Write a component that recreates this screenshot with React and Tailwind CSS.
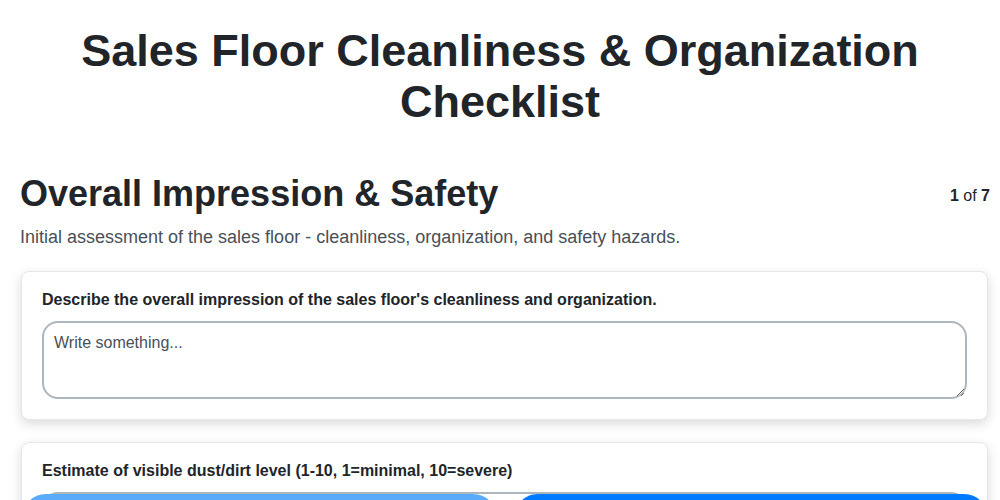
import React from "react";

export default function App() {
  return (
    <div className="min-h-[900px] bg-white text-[#212529]" style={{ fontFamily: '"Liberation Sans", Arial, sans-serif' }}>
      <h1 className="px-[70px] pt-[25px] text-center text-[45px] font-bold leading-[51px]">
        Sales Floor Cleanliness &amp; Organization Checklist
      </h1>
      <div className="pl-5 pr-[10px] pb-32">
        <div className="mt-[45px] flex items-start justify-between">
          <h2 className="text-[36px] font-bold leading-[44px]">Overall Impression &amp; Safety</h2>
          <div className="pt-[12px] text-[16px] leading-[24px]">
            <span className="font-bold">1</span> of <span className="font-bold">7</span>
          </div>
        </div>
        <p className="mt-[8px] text-[18px] leading-[26px] text-[#495057]">
          Initial assessment of the sales floor - cleanliness, organization, and safety hazards.
        </p>

        <div className="mt-[21px] ml-[1px] mr-[2px] rounded-[8px] border border-[#e5e7eb] bg-white px-[20px] pt-[18px] pb-[20px] shadow-[0_4px_12px_rgba(0,0,0,0.15)]">
          <label className="block text-[16px] font-bold leading-[20px]">
            Describe the overall impression of the sales floor's cleanliness and organization.
          </label>
          <textarea
            placeholder="Write something..."
            className="mt-[11px] block h-[78px] w-full resize-y rounded-[16px] border-2 border-[#adb5bd] px-[10px] py-[8px] text-[16px] text-[#495057] placeholder:text-[#495057] outline-none"
            style={{ fontFamily: '"Liberation Sans", Arial, sans-serif' }}
          />
        </div>

        <div className="mt-[22px] ml-[1px] mr-[2px] rounded-[8px] border border-[#e5e7eb] bg-white px-[20px] pt-[18px] pb-[20px] shadow-[0_4px_12px_rgba(0,0,0,0.15)]">
          <label className="block text-[16px] font-bold leading-[20px]">
            Estimate of visible dust/dirt level (1-10, 1=minimal, 10=severe)
          </label>
          <input
            type="number"
            className="mt-[11px] block h-[40px] w-full rounded-[16px] border-2 border-[#adb5bd] px-[10px] text-[16px]"
          />
        </div>
      </div>

      <div className="fixed left-[22px] right-[12px] top-[494px] flex gap-[17px]">
        <button className="h-[48px] flex-1 rounded-full bg-[#5aabfa] text-[18px] font-bold text-white">Previous</button>
        <button className="h-[48px] flex-1 rounded-full bg-[#007bff] text-[18px] font-bold text-white">Next</button>
      </div>
    </div>
  );
}
